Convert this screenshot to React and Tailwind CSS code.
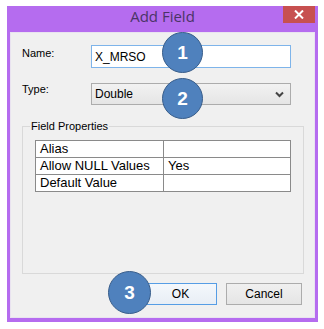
import React from "react";

const ROWS = [
  ["Alias", ""],
  ["Allow NULL Values", "Yes"],
  ["Default Value", ""],
];

// numbered callouts drawn over the dialog
const CALLOUTS = [
  { n: 1, cls: "left-[162px] top-[32px] w-[41px] h-[41px]" },
  { n: 2, cls: "left-[162px] top-[78px] w-[41px] h-[41px]" },
  { n: 3, cls: "left-[108px] top-[271px] w-[43px] h-[43px]" },
];

function Callout({ n, cls }) {
  return (
    <div
      className={`absolute ${cls} rounded-full bg-[#4f81bd] border-[1.5px] border-[#385d8a] flex items-center justify-center text-white font-bold text-[19px] leading-none`}
    >
      {n}
    </div>
  );
}

export default function App() {
  return (
    <div
      className="relative w-[324px] h-[329px] bg-white pt-[6px] pl-[7px] text-[12px] text-black"
      style={{ fontFamily: '"Liberation Sans", Arial, sans-serif' }}
    >
      {/* window frame */}
      <div className="w-[311px] h-[316px] bg-[#b56cef] px-[3px] pb-[4px] flex flex-col">
        {/* title bar */}
        <div className="h-[26px] grid grid-cols-[1fr_auto_1fr] items-start">
          <div />
          <div
            className="text-[15px] leading-[21px] text-[#4a3466]"
            style={{ fontFamily: '"Open Sans", "Noto Sans", sans-serif' }}
          >
            Add Field
          </div>
          <div className="flex justify-end">
            <div className="w-[32px] h-[17px] bg-[#c75050] flex items-center justify-center">
              <svg width="10" height="9" viewBox="0 0 10 9">
                <path d="M1 0.5 L9 8.5 M9 0.5 L1 8.5" stroke="white" strokeWidth="2" />
              </svg>
            </div>
          </div>
        </div>

        {/* client area */}
        <div className="flex-1 bg-[#f0f0f0] border border-[#e9e3f0] px-[11px] flex flex-col">
          <div className="mt-[12px] flex items-center h-[23px] text-[11px]">
            <span className="w-[69px] -mt-[6px]">Name:</span>
            <div className="w-[200px] h-[23px] bg-white border border-[#7eb4ea] flex items-center pl-[3px] text-[12px]">
              X_MRSO
            </div>
          </div>

          <div className="mt-[15px] flex items-center h-[22px] text-[11px]">
            <span className="w-[69px] -mt-[9px]">Type:</span>
            <div className="w-[200px] h-[22px] border border-[#acacac] bg-gradient-to-b from-[#f2f2f2] to-[#e5e5e5] flex items-center justify-between pl-[3px] pr-[6px] text-[12px]">
              <span>Double</span>
              <svg width="9" height="7" viewBox="0 0 9 7">
                <path d="M1 1.5 L4.5 5 L8 1.5" stroke="#444" strokeWidth="2" fill="none" />
              </svg>
            </div>
          </div>

          <fieldset className="mt-[14px] w-[282px] h-[155px] border border-[#d9d9d9] px-0">
            <legend className="ml-[7px] px-[1px] text-[11px] leading-[14px]">Field Properties</legend>
            <table className="mt-[7px] ml-[12px] w-[256px] border-collapse bg-white border border-[#6d6d6d] text-[13px]">
              <tbody>
                {ROWS.map(([k, v]) => (
                  <tr key={k} className="h-[17px]">
                    <td className="w-[128px] border border-[#8a8a8a] pl-[4px] py-0 leading-[16px]">{k}</td>
                    <td className="border border-[#8a8a8a] pl-[4px] py-0 leading-[16px]">{v}</td>
                  </tr>
                ))}
              </tbody>
            </table>
          </fieldset>

          <div className="mt-[9px] flex justify-end gap-[9px] pr-[1px]">
            <button className="w-[73px] h-[22px] border border-[#569de5] bg-gradient-to-b from-[#f4f8fc] to-[#e8eef5]">
              OK
            </button>
            <button className="w-[76px] h-[22px] border border-[#acacac] bg-gradient-to-b from-[#f0f0f0] to-[#e5e5e5]">
              Cancel
            </button>
          </div>
        </div>
      </div>

      {CALLOUTS.map((c) => (
        <Callout key={c.n} {...c} />
      ))}
    </div>
  );
}
